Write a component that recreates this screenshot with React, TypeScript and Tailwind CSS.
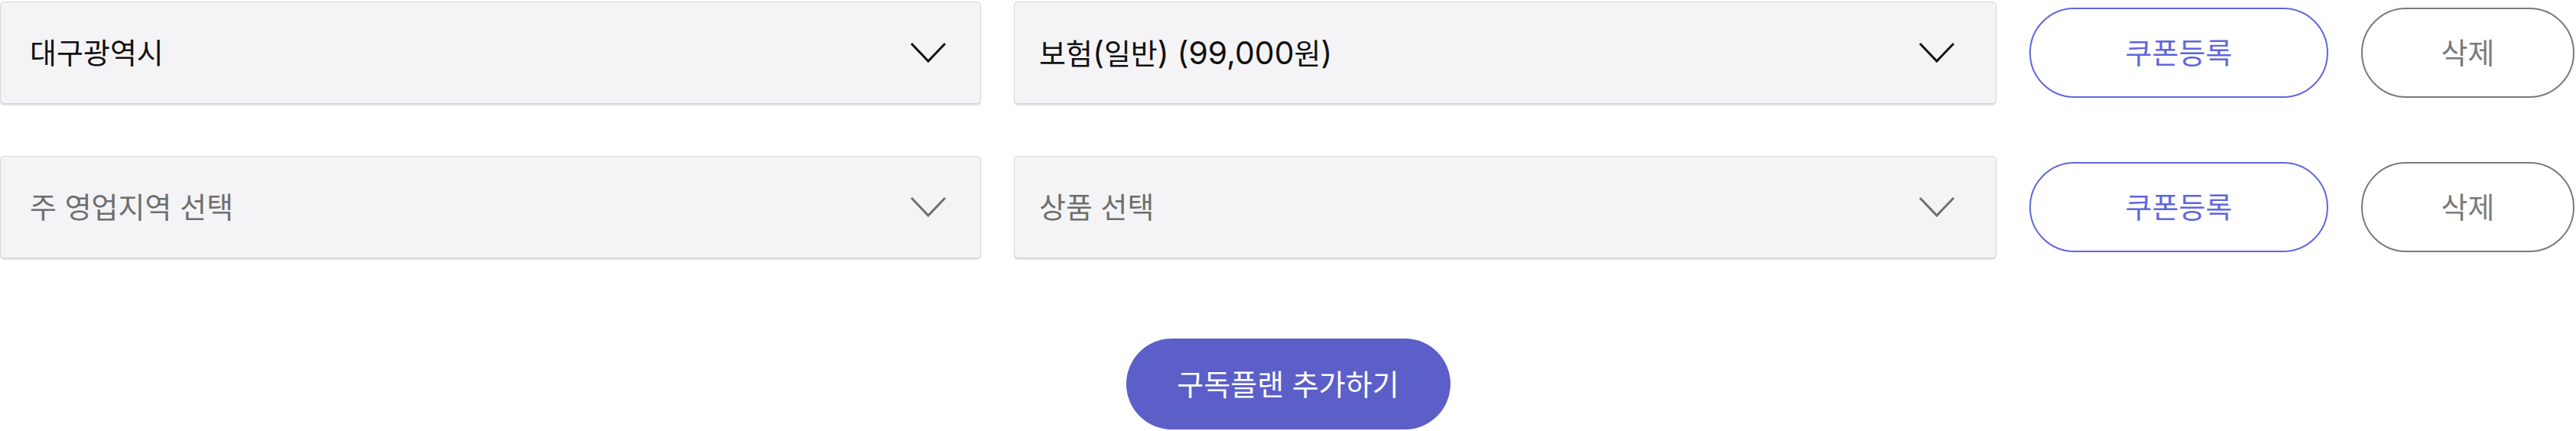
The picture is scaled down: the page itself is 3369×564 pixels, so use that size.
import React from 'react';

interface PlanRow {
  region: string;
  product: string;
}

const rows: PlanRow[] = [
  { region: '대구광역시', product: '보험(일반) (99,000원)' },
  { region: '', product: '' },
];

// latin runs (digits, brackets) render a bit larger than the hangul, like the source font
const MixedText: React.FC<{ text: string }> = ({ text }) => (
  <>
    {text.split(/([^\uAC00-\uD7A3 ]+)/).map((part, i) =>
      i % 2 === 1 ? (
        <span key={i} className="text-[41px]">
          {part}
        </span>
      ) : (
        <span key={i}>{part}</span>
      )
    )}
  </>
);

const Chevron: React.FC<{ muted?: boolean }> = ({ muted }) => (
  <svg width="48" height="28" viewBox="0 0 48 28" fill="none" className="shrink-0">
    <polyline
      points="2,2 24,25 46,2"
      stroke={muted ? '#6f6f6f' : '#111111'}
      strokeWidth="3"
      strokeLinejoin="miter"
    />
  </svg>
);

const SelectBox: React.FC<{ value: string; placeholder: string; className: string }> = ({
  value,
  placeholder,
  className,
}) => (
  <div
    className={`${className} h-[134px] shrink-0 flex items-center justify-between bg-[#f4f4f6] border border-[#d6d6d8] rounded-[5px] shadow-[0_2px_1px_rgba(0,0,0,0.12)]`}
  >
    <span className={`text-[38px] leading-none ${value ? 'text-[#111111]' : 'text-[#6e6e6e]'}`}>
      <MixedText text={value || placeholder} />
    </span>
    <Chevron muted={!value} />
  </div>
);

export default function App() {
  return (
    <div
      className="w-[3369px] h-[564px] bg-white pt-[2px] flex flex-col"
      style={{ fontFamily: 'Inter, "Noto Sans CJK KR", "Noto Sans", sans-serif' }}
    >
      <div className="flex flex-col gap-[68px]">
        {rows.map((row, i) => (
          <div key={i} className="flex items-center gap-[43px]">
            <SelectBox value={row.region} placeholder="주 영업지역 선택" className="w-[1283px] pl-[38px] pr-[44px]" />
            <SelectBox value={row.product} placeholder="상품 선택" className="w-[1285px] pl-[32px] pr-[53px]" />
            <button className="w-[391px] h-[118px] shrink-0 rounded-full border-2 border-[#5f66dd] bg-white text-[38px] text-[#5f66dd] leading-none">
              쿠폰등록
            </button>
            <button className="w-[279px] h-[118px] shrink-0 rounded-full border-2 border-[#7a7a7a] bg-white text-[38px] text-[#7a7a7a] leading-none">
              삭제
            </button>
          </div>
        ))}
      </div>

      <div className="flex justify-center mt-[105px]">
        <button className="w-[424px] h-[119px] rounded-full bg-[#5c5fc8] text-white text-[38px] leading-none">
          구독플랜 추가하기
        </button>
      </div>
    </div>
  );
}
